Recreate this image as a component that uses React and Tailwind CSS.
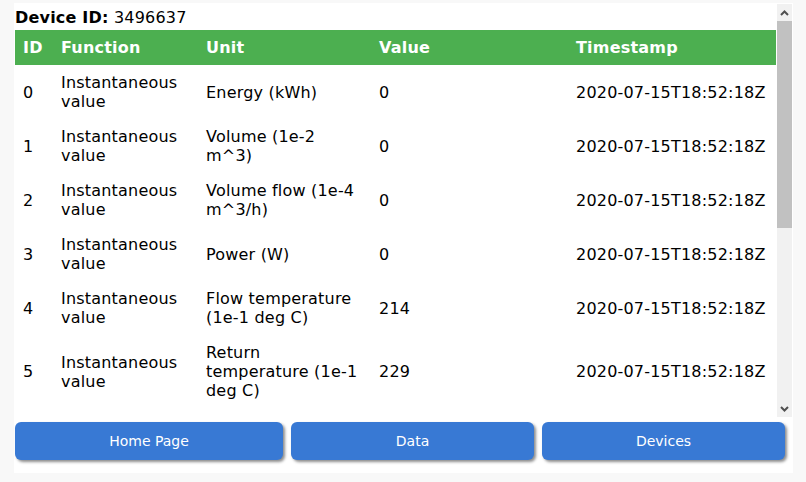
const rows = [
  { id: 0, fn: "Instantaneous value", unit: "Energy (kWh)", value: "0" },
  { id: 1, fn: "Instantaneous value", unit: "Volume (1e-2 m^3)", value: "0" },
  { id: 2, fn: "Instantaneous value", unit: "Volume flow (1e-4 m^3/h)", value: "0" },
  { id: 3, fn: "Instantaneous value", unit: "Power (W)", value: "0" },
  { id: 4, fn: "Instantaneous value", unit: "Flow temperature (1e-1 deg C)", value: "214" },
  { id: 5, fn: "Instantaneous value", unit: "Return temperature (1e-1 deg C)", value: "229" },
  { id: 6, fn: "Instantaneous value", unit: "Temperature difference (1e-1 K)", value: "0" },
  { id: 7, fn: "Instantaneous value", unit: "Volume (1e-2 m^3)", value: "0" },
];

const TS = "2020-07-15T18:52:18Z";

function Chevron({ up }) {
  return (
    <svg width="9" height="6" viewBox="0 0 9 6" className="block">
      <path
        d={up ? "M1 5 L4.5 1.5 L8 5" : "M1 1 L4.5 4.5 L8 1"}
        fill="none"
        stroke="#505050"
        strokeWidth="2"
      />
    </svg>
  );
}

// fake classic scrollbar, the headless browser only draws overlay ones
function ScrollBar() {
  return (
    <div className="flex w-[15px] shrink-0 flex-col bg-[#f1f1f1]">
      <div className="flex h-[17px] items-center justify-center">
        <Chevron up />
      </div>
      <div className="h-[207px] bg-[#c1c1c1]" />
      <div className="flex-1" />
      <div className="flex h-[17px] items-center justify-center">
        <Chevron />
      </div>
    </div>
  );
}

export default function App() {
  return (
    <div
      className="min-h-[482px] w-full bg-[#f8f8f8] pt-[3px]"
      style={{ fontFamily: '"DejaVu Sans", Verdana, sans-serif' }}
    >
      <div className="ml-[14px] flex h-[470px] w-[779px] flex-col bg-white">
        <div className="mt-px flex h-[413px] pr-px">
          <div className="h-full w-[763px] overflow-hidden pl-px pt-[4px] tracking-[0.2px]">
            <div className="mb-[3px] text-[16px] leading-[19px] text-black">
              <span className="font-bold">Device ID:</span> 3496637
            </div>
            <table className="w-[761px] table-fixed border-collapse text-left text-[16px] leading-[19px] text-black">
              <colgroup>
                <col className="w-[38px]" />
                <col className="w-[145px]" />
                <col className="w-[173px]" />
                <col className="w-[197px]" />
                <col className="w-[208px]" />
              </colgroup>
              <thead>
                <tr className="bg-[#4caf50] text-white">
                  <th className="px-2 py-2 font-bold">ID</th>
                  <th className="px-2 py-2 font-bold">Function</th>
                  <th className="px-2 py-2 font-bold">Unit</th>
                  <th className="px-2 py-2 font-bold">Value</th>
                  <th className="px-2 py-2 font-bold">Timestamp</th>
                </tr>
              </thead>
              <tbody>
                {rows.map((r) => (
                  <tr key={r.id}>
                    <td className="px-2 py-2 align-middle">{r.id}</td>
                    <td className="px-2 py-2 align-middle">{r.fn}</td>
                    <td className="px-2 py-2 align-middle">{r.unit}</td>
                    <td className="px-2 py-2 align-middle">{r.value}</td>
                    <td className="px-2 py-2 align-middle">{TS}</td>
                  </tr>
                ))}
              </tbody>
            </table>
          </div>
          <ScrollBar />
        </div>
        <div className="mt-[5px] flex gap-2 pl-px">
          {[
            ["Home Page", "w-[268px]"],
            ["Data", "w-[243px]"],
            ["Devices", "w-[243px]"],
          ].map(([label, w]) => (
            <button
              key={label}
              className={`${w} h-[38px] rounded-[6px] bg-[#3879d4] text-[14px] text-white shadow-[2px_2px_3px_rgba(0,0,0,0.45)]`}
            >
              {label}
            </button>
          ))}
        </div>
      </div>
    </div>
  );
}
